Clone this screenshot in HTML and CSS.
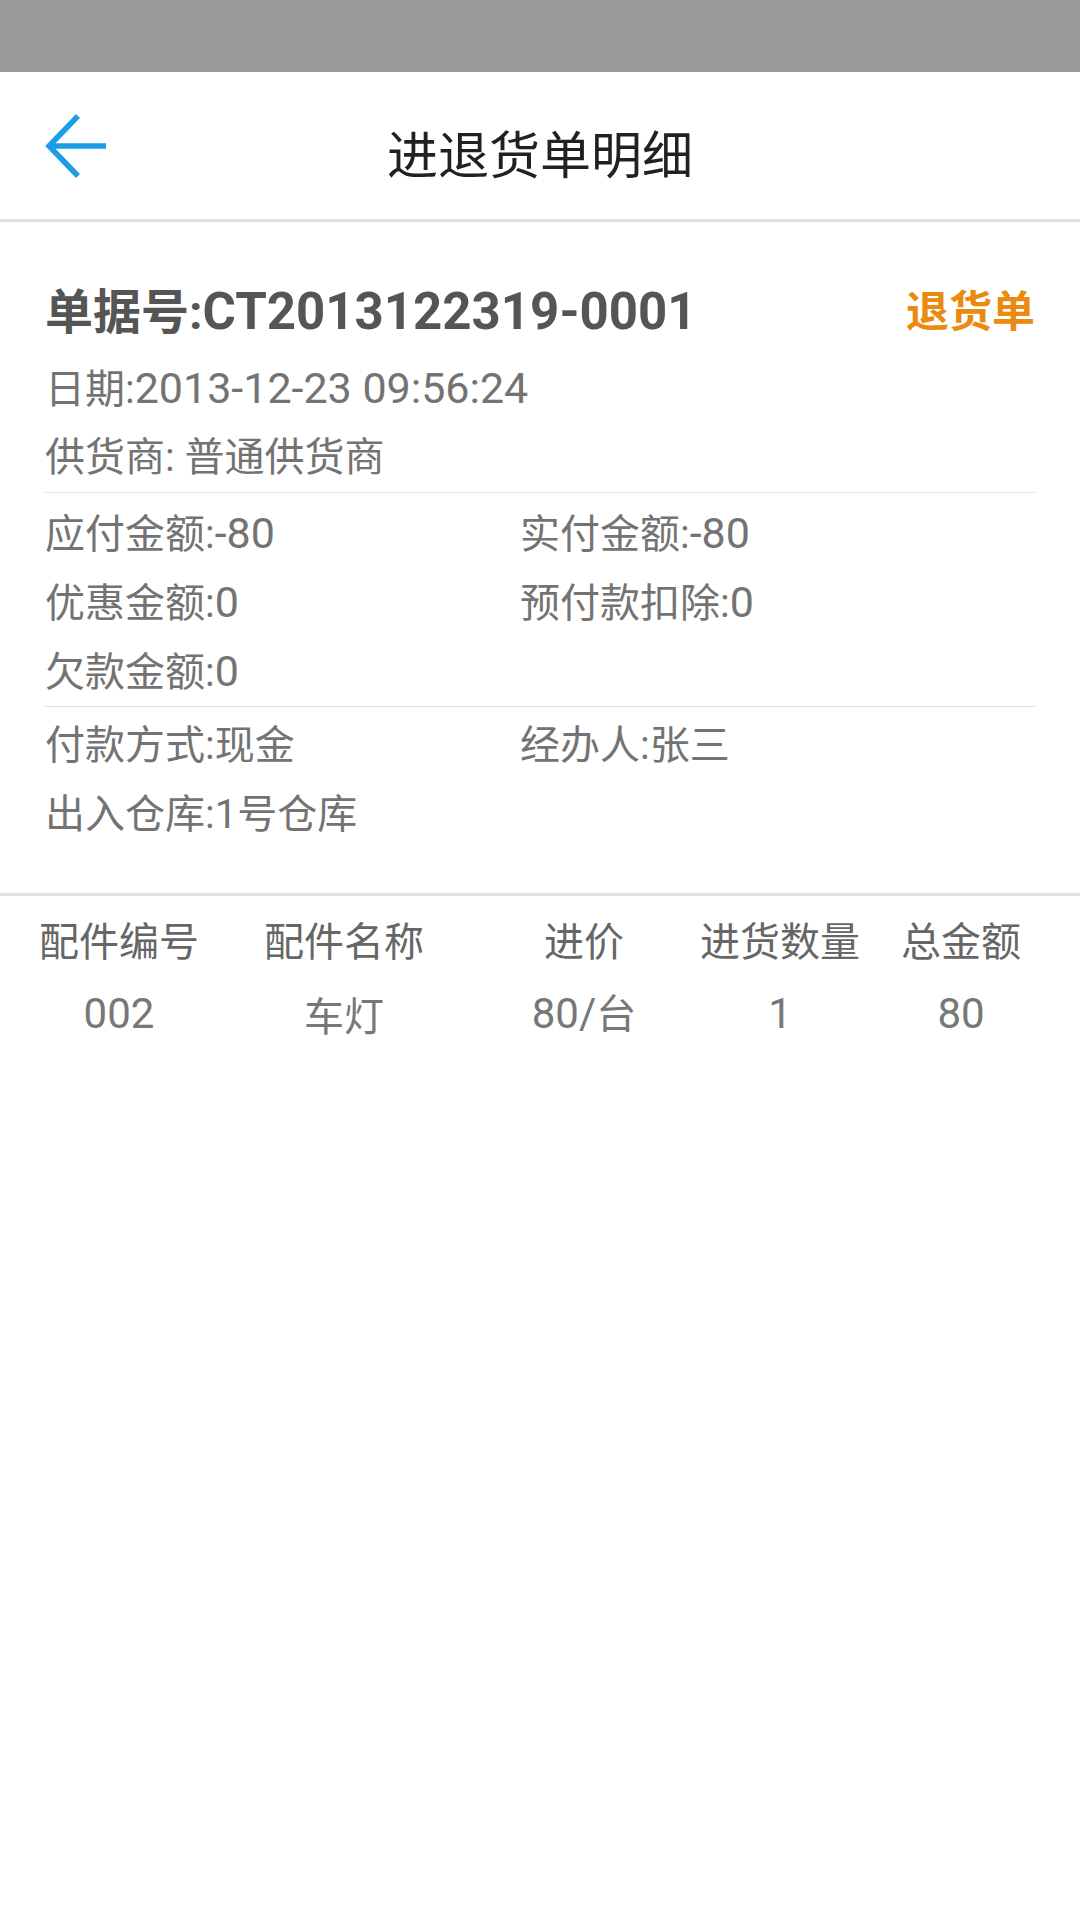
FILE: index.html
```html
<!DOCTYPE html>
<html lang="zh-CN">
<head>
    <meta charset="UTF-8">
    <meta name="viewport" content="width=device-width, initial-scale=1.0">
    <title>进退货单明细</title>
    <link rel="stylesheet" href="styles.css">
</head>
<body>
    <div class="status-bar"></div>

    <header class="topbar">
        <a class="back" href="#">
            <svg width="70" height="64" viewBox="0 0 70 64">
                <path d="M38 2 L9 32 L38 62 M9 32 H66" fill="none" stroke="#1a9ee9" stroke-width="5.5"/>
            </svg>
        </a>
        <h1>进退货单明细</h1>
        <span></span>
    </header>

    <section class="order">
        <div class="order-head">
            <div class="order-no"><span class="label">单据号:</span>CT2013122319-0001</div>
            <div class="order-type">退货单</div>
        </div>
        <div class="line"><span class="label">日期:</span>2013-12-23 09:56:24</div>
        <div class="line cjk">供货商: 普通供货商</div>

        <div class="group amounts">
            <div class="line"><span class="label">应付金额:</span>-80</div>
            <div class="line"><span class="label">实付金额:</span>-80</div>
            <div class="line"><span class="label">优惠金额:</span>0</div>
            <div class="line"><span class="label">预付款扣除:</span>0</div>
            <div class="line"><span class="label">欠款金额:</span>0</div>
        </div>

        <div class="group extra">
            <div class="line cjk">付款方式:现金</div>
            <div class="line cjk">经办人:张三</div>
            <div class="line cjk">出入仓库:1号仓库</div>
        </div>
    </section>

    <div class="parts">
        <div class="parts-row parts-head">
            <div>配件编号</div>
            <div>配件名称</div>
            <div>进价</div>
            <div>进货数量</div>
            <div>总金额</div>
        </div>
        <div class="parts-row">
            <div>002</div>
            <div class="cjk">车灯</div>
            <div>80/<span class="label">台</span></div>
            <div>1</div>
            <div>80</div>
        </div>
    </div>
</body>
</html>
```

FILE: styles.css
```css
body {
    margin: 0;
    width: 1080px;
    min-height: 1920px;
    background-color: #fff;
    font-family: Roboto, "Noto Sans CJK SC", sans-serif;
    color: #737373;
}
.status-bar {
    height: 72px;
    background-color: #999;
}
.topbar {
    height: 147px;
    border-bottom: 3px solid #e0e0e0;
    display: grid;
    grid-template-columns: 1fr auto 1fr;
    align-items: center;
}
.back {
    display: flex;
    margin-left: 40px;
}
.topbar h1 {
    margin: 0;
    padding-top: 12px;
    font-size: 51px;
    font-weight: normal;
    color: #212121;
}
.order {
    padding: 40px 45px 44px;
    border-bottom: 3px solid #e0e0e0;
}
.order-head {
    height: 92px;
    display: flex;
    align-items: center;
    justify-content: space-between;
}
.order-no {
    padding-top: 6px;
    font-size: 51px;
    font-weight: bold;
    color: #555;
}
.order-no .label {
    font-size: 48px;
}
.order-type {
    font-size: 43px;
    font-weight: bold;
    color: #ea8a0f;
}
.line {
    font-size: 43px;
    line-height: 69px;
    white-space: nowrap;
}
/* CJK glyphs run a little smaller than the digits */
.label {
    font-size: 40px;
    line-height: 1;
}
.cjk {
    font-size: 40px;
}
.group {
    display: grid;
    grid-template-columns: 475px 1fr;
    border-top: 1px solid #e0e0e0;
}
.amounts {
    padding-top: 6px;
}
.extra {
    padding-top: 4px;
}
.parts {
    padding-top: 5px;
}
.parts-row {
    display: grid;
    grid-template-columns: 238px 212px 268px 124px 238px;
    height: 75px;
    align-items: center;
    font-size: 42px;
    color: #777;
    white-space: nowrap;
}
.parts-row > div {
    display: flex;
    justify-content: center;
    align-items: baseline;
}
.parts-head {
    font-size: 40px;
    color: #666;
}
```
